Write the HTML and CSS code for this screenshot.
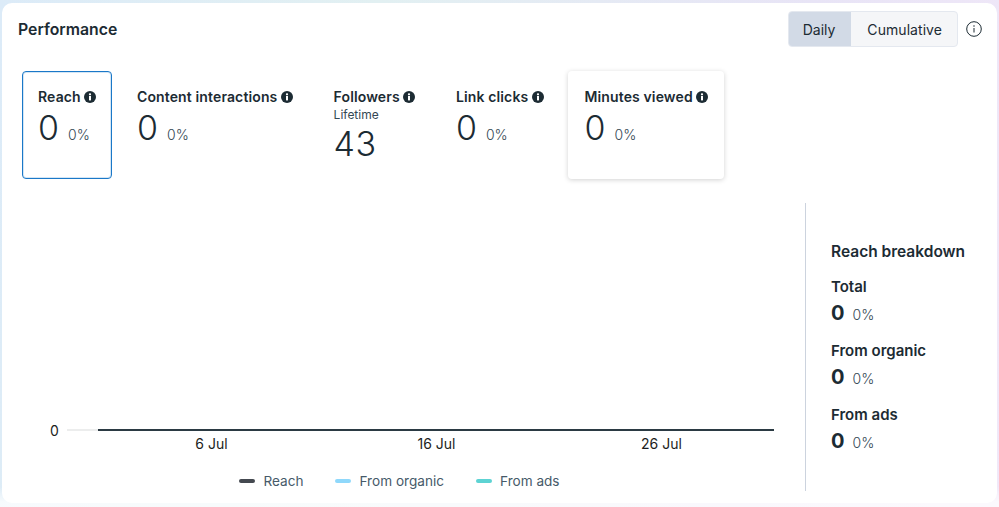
FILE: index.html
```html
<!DOCTYPE html>
<html lang="en">
<head>
<meta charset="utf-8">
<title>Performance</title>
<link rel="stylesheet" href="styles.css">
</head>
<body>
<svg class="sprite" width="0" height="0" aria-hidden="true">
  <symbol id="info-solid" viewBox="0 0 12 12">
    <circle cx="6" cy="6" r="6" fill="#1c2b33"/>
    <rect x="5" y="5" width="2" height="4.4" fill="#fff"/>
    <circle cx="6" cy="3.3" r="1.15" fill="#fff"/>
  </symbol>
</svg>
<main class="card">
  <header class="head">
    <h1 class="title">Performance</h1>
    <div class="controls">
      <div class="toggle">
        <span class="seg seg-on">Daily</span>
        <span class="seg">Cumulative</span>
      </div>
      <svg class="info-line" viewBox="0 0 16 16" width="16" height="16">
        <circle cx="8" cy="8" r="7.3" fill="none" stroke="#1c2b33" stroke-width="1"/>
        <rect x="7.5" y="7" width="1" height="4.5" fill="#1c2b33"/>
        <circle cx="8" cy="5" r=".75" fill="#1c2b33"/>
      </svg>
    </div>
  </header>

  <section class="metrics">
    <div class="tile tile-selected">
      <div class="label">Reach <svg class="i"><use href="#info-solid"/></svg></div>
      <div class="value"><span class="num">0</span><span class="pct">0%</span></div>
    </div>
    <div class="tile">
      <div class="label">Content interactions <svg class="i"><use href="#info-solid"/></svg></div>
      <div class="value"><span class="num">0</span><span class="pct">0%</span></div>
    </div>
    <div class="tile">
      <div class="label">Followers <svg class="i"><use href="#info-solid"/></svg></div>
      <div class="sub">Lifetime</div>
      <div class="value value-tight"><span class="num">43</span></div>
    </div>
    <div class="tile">
      <div class="label">Link clicks <svg class="i"><use href="#info-solid"/></svg></div>
      <div class="value"><span class="num">0</span><span class="pct">0%</span></div>
    </div>
    <div class="tile tile-raised">
      <div class="label">Minutes viewed <svg class="i"><use href="#info-solid"/></svg></div>
      <div class="value"><span class="num">0</span><span class="pct">0%</span></div>
    </div>
  </section>

  <section class="body">
    <div class="chart">
      <div class="plot">
        <span class="y-label">0</span>
        <span class="y-tick"></span>
        <span class="y-line"></span>
      </div>
      <div class="x-axis">
        <span>6 Jul</span>
        <span>16 Jul</span>
        <span>26 Jul</span>
      </div>
      <div class="legend">
        <span class="key"><i class="swatch swatch-reach"></i>Reach</span>
        <span class="key"><i class="swatch swatch-organic"></i>From organic</span>
        <span class="key"><i class="swatch swatch-ads"></i>From ads</span>
      </div>
    </div>
    <aside class="side">
      <h2 class="side-title">Reach breakdown</h2>
      <div class="stat">
        <div class="stat-label">Total</div>
        <div class="stat-value"><b>0</b><span>0%</span></div>
      </div>
      <div class="stat">
        <div class="stat-label">From organic</div>
        <div class="stat-value"><b>0</b><span>0%</span></div>
      </div>
      <div class="stat">
        <div class="stat-label">From ads</div>
        <div class="stat-value"><b>0</b><span>0%</span></div>
      </div>
    </aside>
  </section>
</main>
</body>
</html>
```

FILE: styles.css
```css
* { box-sizing: border-box; }

html, body { height: 100%; }

body {
  margin: 0;
  padding: 3px 2px 4px 2px;
  overflow: hidden;
  background:
    linear-gradient(to bottom, rgba(255, 255, 255, 0) 96%, rgba(255, 255, 255, .75) 99%),
    linear-gradient(100deg, #dcebf8 0%, #e2f0f2 35%, #e8e4f6 75%, #f1e8f8 100%);
  font-family: Inter, "Liberation Sans", sans-serif;
  color: #1c2b33;
}

.sprite { position: absolute; }

.card {
  height: 500px;
  background: #fff;
  border-radius: 10px;
}

.head {
  display: flex;
  justify-content: space-between;
  align-items: center;
  padding: 8px 15px 0 16px;
}

.title {
  margin: 1px 0 0;
  font-size: 15.8px;
  line-height: 20px;
  font-weight: 600;
}

.controls {
  display: flex;
  align-items: center;
  gap: 8px;
}

.toggle {
  display: flex;
  height: 36px;
  border: 1px solid #e4e8ef;
  border-radius: 4px;
  background: #f5f6f8;
  overflow: hidden;
  font-size: 14px;
  color: #1c2b33;
}

.seg {
  display: flex;
  align-items: center;
  padding: 0 16px 0 14px;
}

.seg + .seg {
  padding: 0 15px 0 16px;
  letter-spacing: .06px;
}

.seg-on {
  background: #d2dae6;
}

.info-line { display: block; }

.metrics {
  display: flex;
  gap: 8.67px;
  margin: 24px 0 0 20px;
}

.tile {
  height: 108px;
  padding: 18px 16px 0;
  border-radius: 4px;
}

.tile-selected {
  width: 90px;
  margin-right: .33px;
  padding: 17px 15px 0;
  border: 1px solid #1a78c8;
  box-shadow: inset 0 0 0 1px #d4e6f5;
}

.tile-raised {
  box-shadow: 0 1px 5px rgba(0, 0, 0, .18);
}

.label {
  display: flex;
  align-items: center;
  gap: 3.5px;
  white-space: nowrap;
  font-size: 14px;
  line-height: 16px;
  font-weight: 600;
  letter-spacing: .13px;
}

.i {
  width: 12px;
  height: 12px;
  flex: none;
}

.sub {
  font-size: 12px;
  line-height: 14px;
  margin-top: 3px;
  color: #344854;
}

.value {
  display: flex;
  align-items: baseline;
  margin-top: 3px;
}

.value-tight { margin-top: 2px; }

.num {
  font-size: 34px;
  line-height: 40px;
  font-weight: 300;
  letter-spacing: .5px;
}

.pct {
  margin-left: 8.5px;
  font-size: 14px;
  font-weight: 300;
  color: #344854;
}

.body {
  display: flex;
  margin-top: 24px;
}

.chart {
  width: 803px;
  height: 288px;
  padding-top: 217px;
}

.plot {
  position: relative;
  height: 16px;
}

.y-label {
  position: absolute;
  left: 48px;
  top: 3px;
  font-size: 14px;
  line-height: 16px;
  color: #1c1e21;
}

.y-tick {
  position: absolute;
  left: 65px;
  top: 9px;
  width: 31px;
  height: 2px;
  background: #eceded;
}

.y-line {
  position: absolute;
  left: 96px;
  top: 9px;
  width: 676px;
  height: 2px;
  background: #2b3a43;
}

.x-axis {
  display: grid;
  grid-template-columns: repeat(3, 1fr);
  margin-left: 97px;
  width: 675px;
  text-align: center;
  font-size: 14px;
  line-height: 16px;
  color: #1c1e21;
}

.legend {
  display: flex;
  gap: 32px;
  justify-content: center;
  margin: 21px 0 0 0;
  padding-right: 8px;
  font-size: 13.6px;
  line-height: 16px;
  color: #465a69;
}

.key {
  display: flex;
  align-items: center;
  gap: 8px;
}

.swatch {
  width: 16px;
  height: 4px;
  border-radius: 2px;
}

.swatch-reach { background: #444950; }
.swatch-organic { background: #8fd8fb; }
.swatch-ads { background: #5dd3d3; }

.side {
  width: 192px;
  height: 288px;
  border-left: 1px solid #ccd3de;
  padding: 39px 0 0 25px;
}

.side-title {
  margin: 0;
  font-size: 15.5px;
  line-height: 20px;
  font-weight: 600;
}

.stat { margin-top: 17px; }

.stat + .stat { margin-top: 16px; }

.stat-label {
  font-size: 15px;
  line-height: 16px;
  font-weight: 600;
}

.stat-value {
  display: flex;
  align-items: baseline;
  margin-top: 6px;
  line-height: 24px;
}

.stat-value b {
  font-size: 20px;
  font-weight: 700;
}

.stat-value span {
  margin-left: 8px;
  font-size: 14px;
  font-weight: 300;
  color: #344854;
}
```
